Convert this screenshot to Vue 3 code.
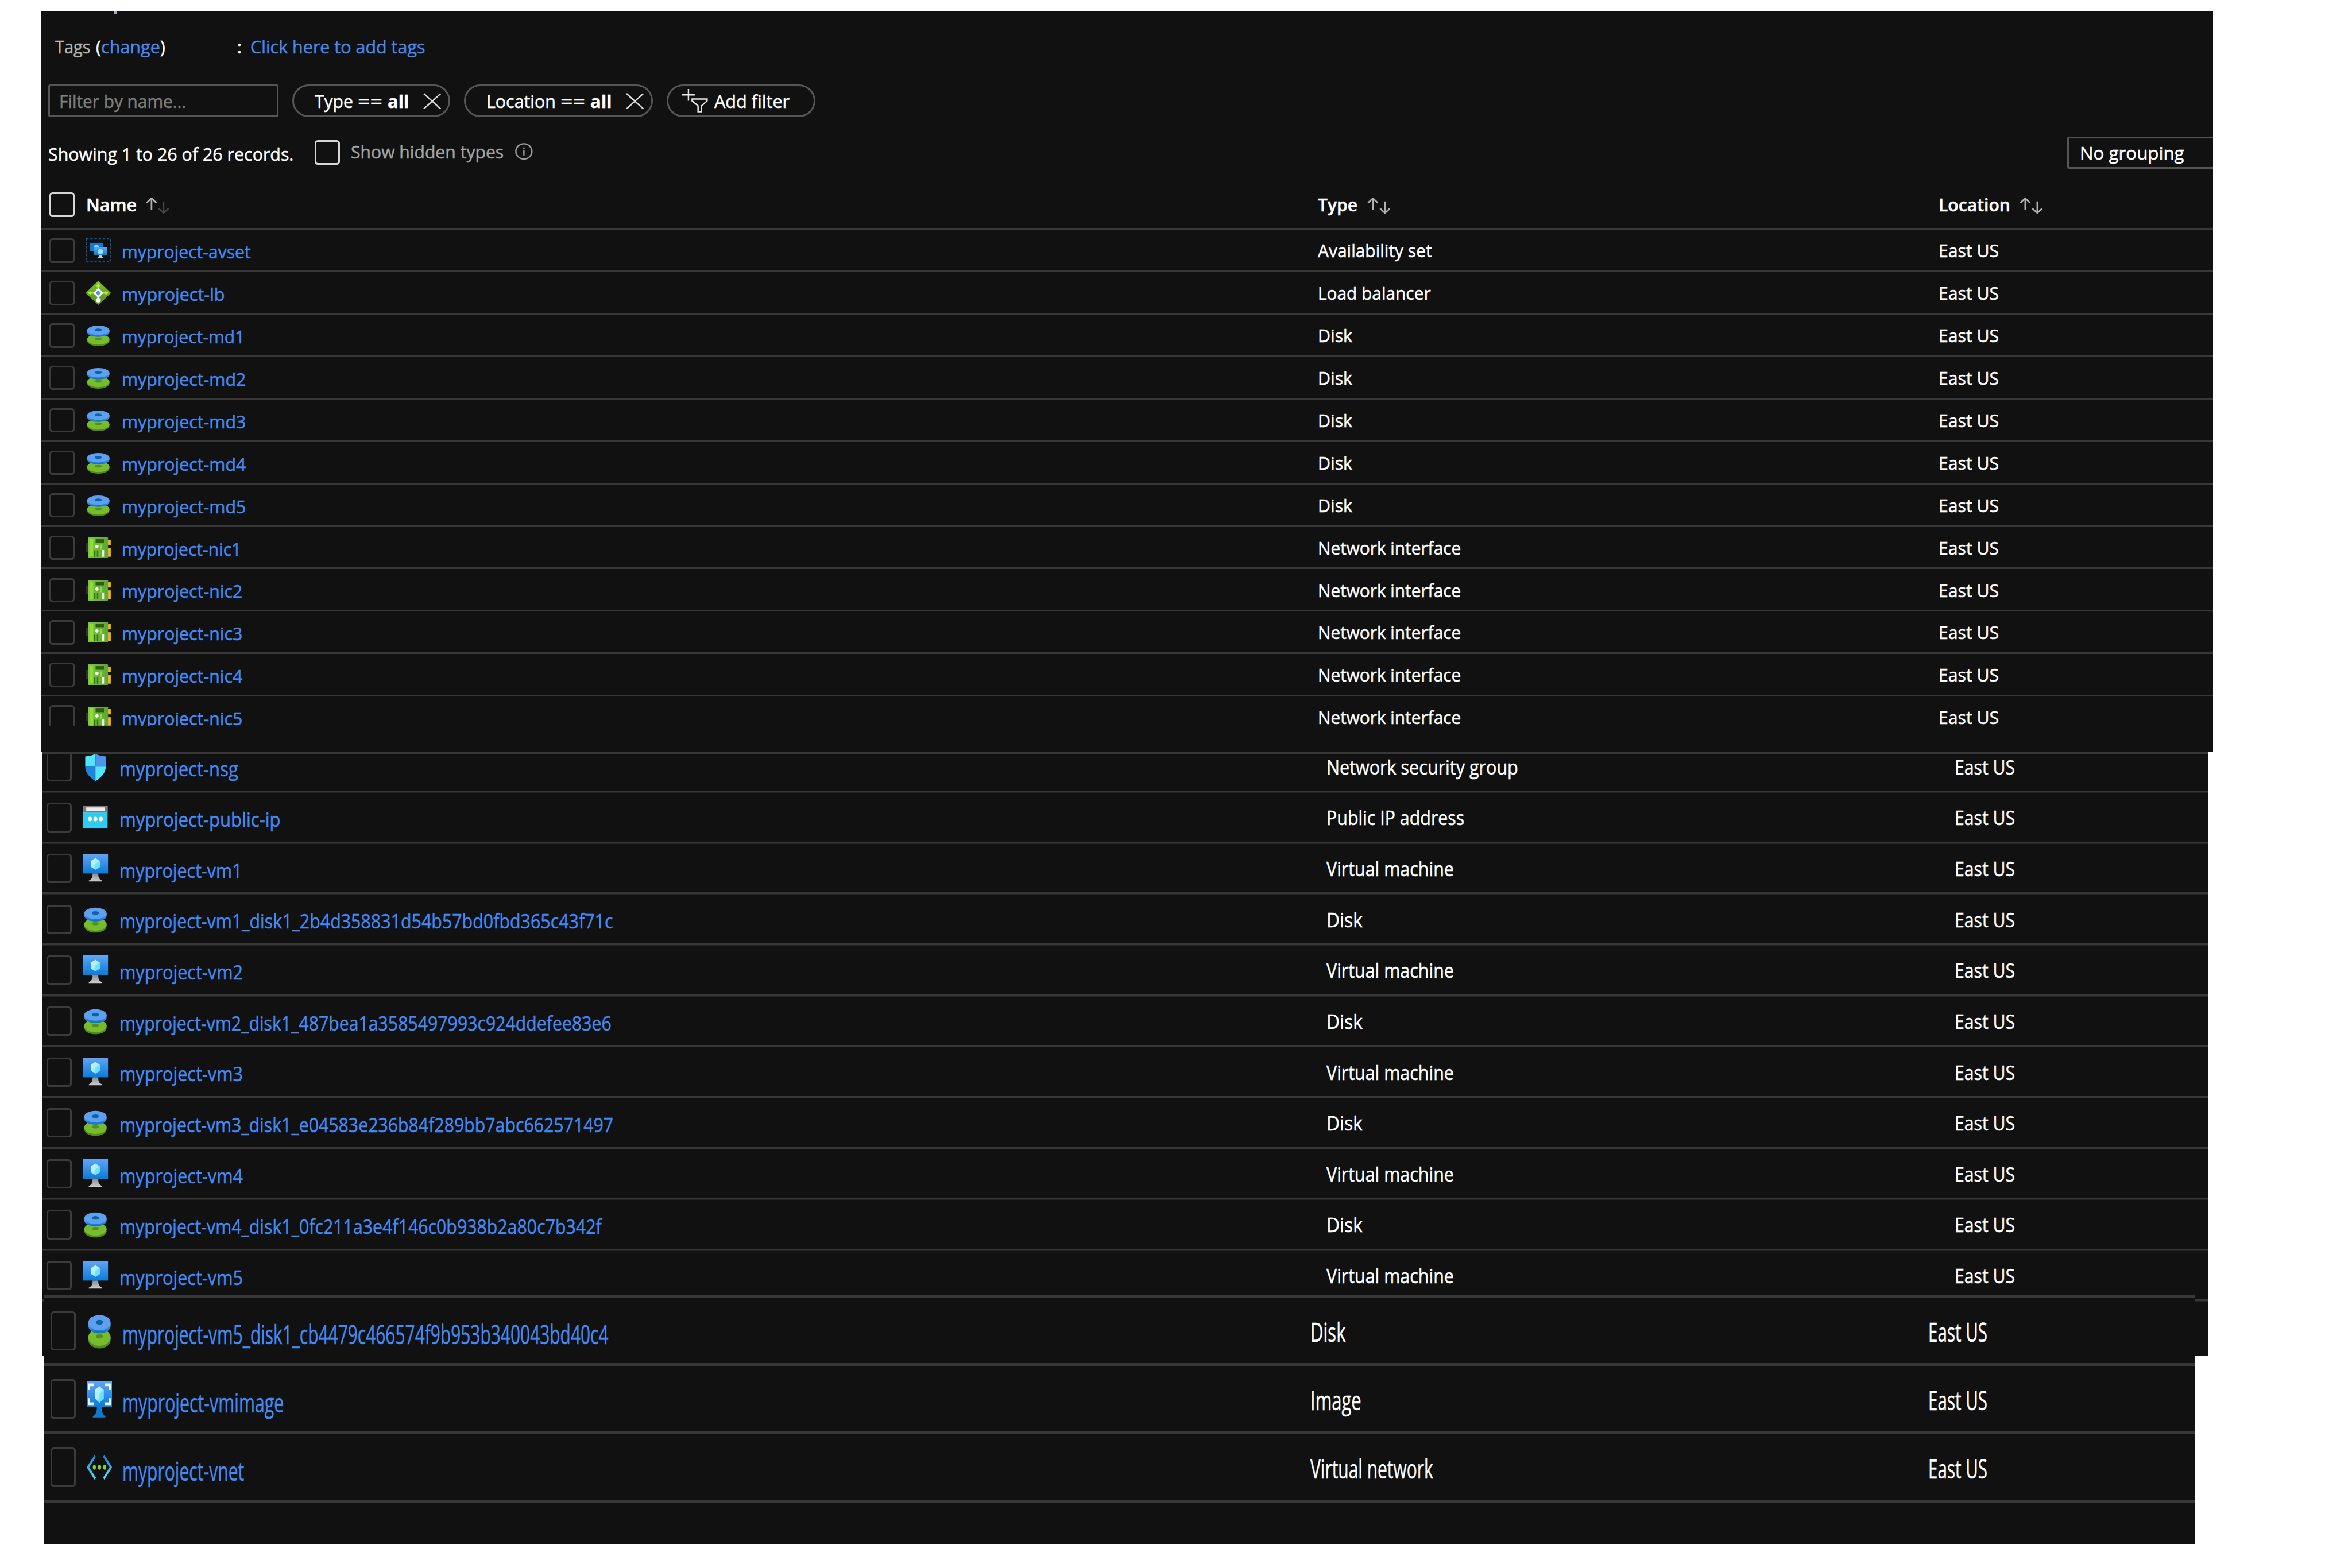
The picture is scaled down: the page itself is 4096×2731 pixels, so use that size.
<script setup>
// 1rem is 1/60 of the window's width; label widths are given in hundredths of it.
const REM = () => parseFloat(getComputedStyle(document.documentElement).fontSize)

// Condenses or widens a label so that it takes exactly the given number of grid units.
function fit(el, { value }) {
  el.style.transform = 'none'
  el.style.marginRight = '0'
  const natural = el.getBoundingClientRect().width
  const target = (value * REM()) / 100
  el.style.transform = `scaleX(${target / natural})`
  el.style.marginRight = `${target - natural}px`
}
const vFit = { mounted: fit }

const vmDisk = (n, hash) => `myproject-vm${n}_disk1_${hash}`

const listA = [
  ['avset', 'myproject-avset', 329, 'Availability set', 291],
  ['lb', 'myproject-lb', 263, 'Load balancer', 288],
  ['disk', 'myproject-md1', 314, 'Disk', 88],
  ['disk', 'myproject-md2', 317, 'Disk', 88],
  ['disk', 'myproject-md3', 317, 'Disk', 88],
  ['disk', 'myproject-md4', 317, 'Disk', 88],
  ['disk', 'myproject-md5', 317, 'Disk', 88],
  ['nic', 'myproject-nic1', 305, 'Network interface', 365],
  ['nic', 'myproject-nic2', 308, 'Network interface', 365],
  ['nic', 'myproject-nic3', 308, 'Network interface', 365],
  ['nic', 'myproject-nic4', 308, 'Network interface', 365],
  ['nic', 'myproject-nic5', 308, 'Network interface', 365],
]
const listB = [
  ['nsg', 'myproject-nsg', 303, 'Network security group', 489],
  ['ip', 'myproject-public-ip', 411, 'Public IP address', 352],
  ['vm', 'myproject-vm1', 313, 'Virtual machine', 325],
  ['disk', vmDisk(1, '2b4d358831d54b57bd0fbd365c43f71c'), 1259, 'Disk', 92],
  ['vm', 'myproject-vm2', 315, 'Virtual machine', 325],
  ['disk', vmDisk(2, '487bea1a3585497993c924ddefee83e6'), 1255, 'Disk', 92],
  ['vm', 'myproject-vm3', 315, 'Virtual machine', 325],
  ['disk', vmDisk(3, 'e04583e236b84f289bb7abc662571497'), 1260, 'Disk', 92],
  ['vm', 'myproject-vm4', 315, 'Virtual machine', 325],
  ['disk', vmDisk(4, '0fc211a3e4f146c0b938b2a80c7b342f'), 1230, 'Disk', 92],
  ['vm', 'myproject-vm5', 315, 'Virtual machine', 325],
]
const listC = [
  ['disk', vmDisk(5, 'cb4479c466574f9b953b340043bd40c4'), 1240, 'Disk', 90],
  ['image', 'myproject-vmimage', 412, 'Image', 130],
  ['vnet', 'myproject-vnet', 311, 'Virtual network', 313],
]
const sections = [
  { cls: 'a', rows: listA, loc: 154 },
  { cls: 'b', rows: listB, loc: 154 },
  { cls: 'c', rows: listC, loc: 151 },
]
</script>

<template>
  <svg class="defs" width="0" height="0" aria-hidden="true">
    <defs>
      <linearGradient id="g-blue" x1="0" y1="0" x2="0" y2="1"><stop offset="0" stop-color="#62a4f3" /><stop offset="1" stop-color="#0a7bda" /></linearGradient>
      <linearGradient id="g-side" x1="0" y1="0" x2="0" y2="1"><stop offset="0" stop-color="#5ea0ef" /><stop offset="1" stop-color="#0072cf" /></linearGradient>
      <linearGradient id="g-green" x1="0" y1="0" x2="0" y2="1"><stop offset="0" stop-color="#7cc62c" /><stop offset="1" stop-color="#568a1c" /></linearGradient>
      <linearGradient id="g-board" x1="0" y1="0" x2="1" y2="0"><stop offset="0" stop-color="#7ccb34" /><stop offset="1" stop-color="#5fa33c" /></linearGradient>
      <linearGradient id="g-cube" x1="0" y1="0" x2="1" y2="1"><stop offset="0" stop-color="#d8f7ff" /><stop offset=".5" stop-color="#a5eeff" /><stop offset="1" stop-color="#3fd0f6" /></linearGradient>
      <linearGradient id="g-stand" x1="0" y1="0" x2="0" y2="1"><stop offset="0" stop-color="#8a8a8a" /><stop offset="1" stop-color="#cfcfcf" /></linearGradient>
      <linearGradient id="g-chev" x1="0" y1="0" x2="0" y2="1"><stop offset="0" stop-color="#1384dc" /><stop offset="1" stop-color="#4fe3fb" /></linearGradient>
    </defs>
    <symbol id="i-avset" viewBox="0 0 18 18" preserveAspectRatio="none">
      <rect x=".5" y=".5" width="17" height="17" fill="none" stroke="#0b5793" stroke-width=".9" stroke-dasharray="1.7 1.2" />
      <rect x="3.1" y="3.4" width="9.2" height="6.3" fill="#0d7bd9" />
      <path d="M7.7 4.6l1.7 1v2.1l-1.7 1-1.7-1V5.600z" fill="#7fd9ff" />
      <rect x="5.800" y="6.700" width="9.300" height="6.100" fill="url(#g-blue)" />
      <path d="M10.500 7.900l1.800 1v2.200l-1.800 1-1.800-1V8.900z" fill="#8be6ff" />
      <path d="M9.700 12.800h1.600l1.200 2.100H8.500z" fill="#c9c9c9" />
    </symbol>
    <symbol id="i-lb" viewBox="0 0 18 18" preserveAspectRatio="none">
      <path d="M9 0l9 9-9 9-9-9z" fill="url(#g-green)" />
      <path d="M9 2v5M2 9h5M16 9h-5" stroke="#b4ec36" stroke-width="1.200" />
      <path d="M9 2.200l1.700 2H7.300zM2 9l2-1.600v3.200zM16 9l-2-1.600v3.200z" fill="#b4ec36" />
      <path d="M9 11v3.500" stroke="#fff" stroke-width="1.400" />
      <ellipse cx="9" cy="14.400" rx="1.800" ry="1.700" fill="#fff" />
      <path d="M9 6l3 3-3 3-3-3z" fill="#fff" stroke="#fff" />
      <path d="M9 7l2 2-2 2-2-2z" fill="#4c96f2" />
    </symbol>
    <symbol id="i-disk" viewBox="0 0 18 18" preserveAspectRatio="none">
      <path d="M1.100 11.600v1.400c0 2.300 3.500 4 7.900 4s7.900-1.700 7.900-4v-1.400z" fill="#55891f" />
      <ellipse cx="9" cy="11.900" rx="7.900" ry="3.900" fill="#76bc2d" />
      <ellipse cx="9" cy="11.500" rx="2.500" ry="1" fill="#568e22" />
      <path d="M1.100 5.300v1.200c0 2.200 3.500 3.600 7.900 3.600s7.900-1.400 7.900-3.600V5.300z" fill="url(#g-side)" />
      <ellipse cx="9" cy="5.200" rx="7.900" ry="3.500" fill="#5ea0ef" />
      <ellipse cx="9" cy="5" rx="2.600" ry="1.100" fill="#0d63a8" />
    </symbol>
    <symbol id="i-nic" viewBox="0 0 18 18" preserveAspectRatio="none">
      <rect x=".3" y="5.500" width="1.700" height="6.500" fill="#303030" />
      <rect x="15.500" y="3" width="2.300" height="3.900" fill="#fbb900" />
      <rect x="15.500" y="9" width="2.300" height="6.600" fill="#fbb900" />
      <rect x="1.900" y="1.300" width="14" height="15.300" rx=".5" fill="url(#g-board)" />
      <rect x="2.800" y="2.500" width="2.600" height="12.800" fill="#8edb3a" />
      <rect x="10.300" y="6.500" width="1.500" height="4" fill="#8edb3a" />
      <rect x="7.100" y="2.600" width="5.900" height="2.700" fill="#2f5e12" />
      <circle cx="8" cy="8" r="1.200" fill="#fff" />
      <path d="M6.500 10.800v4.800M8.500 10.800v4.800" stroke="#39701a" stroke-width="1" />
      <rect x="11.700" y="10.600" width="1.400" height="5" fill="#f0f7ea" />
    </symbol>
    <symbol id="i-nsg" viewBox="0 0 18 18" preserveAspectRatio="none">
      <path d="M9 .9C7 2 4.500 2.500 1.800 2.600V9H9z" fill="#50e6ff" />
      <path d="M9 .9c2 1.100 4.500 1.600 7.300 1.700V9H9z" fill="#4c95ea" />
      <path d="M1.800 8.900c0 4.500 4.200 7 7.200 8.900V8.900z" fill="#1f84de" />
      <path d="M16.300 8.900c0 4.500-4.200 7-7.300 8.900V8.900z" fill="#50e6ff" />
    </symbol>
    <symbol id="i-ip" viewBox="0 0 18 18" preserveAspectRatio="none">
      <rect x=".4" y="2" width="17.200" height="13.800" rx=".3" fill="#30cbee" />
      <rect x=".4" y="2" width="17.200" height="3.800" fill="#7a7a7a" />
      <rect x="2.500" y="2.900" width="13.100" height="2.100" fill="#ececec" />
      <g fill="#fff"><circle cx="5.200" cy="10" r="1.400" /><circle cx="9" cy="10" r="1.400" /><circle cx="12.900" cy="10" r="1.400" /></g>
    </symbol>
    <symbol id="i-vm" viewBox="0 0 18 18" preserveAspectRatio="none">
      <path d="M7 12h4c0 2.500.6 3.600 2.700 4.400V17H4.300v-.6C6.400 15.600 7 14.500 7 12z" fill="url(#g-stand)" />
      <rect width="18" height="12.100" fill="url(#g-blue)" />
      <path d="M9 2.600l3.100 1.700v3.800L9 9.800 5.900 8.100V4.300z" fill="url(#g-cube)" />
      <path d="M9 6.200l3.100-1.800v3.700L9 9.800z" fill="#6fe2fb" />
    </symbol>
    <symbol id="i-image" viewBox="0 0 18 18" preserveAspectRatio="none">
      <path d="M7.200 12.500h3.500c0 2.700.5 3.700 2.500 4.600v.5H4.300v-.5c2.200-.9 2.900-1.900 2.900-4.600z" fill="#1079cc" />
      <rect y=".9" width="18" height="12" fill="url(#g-blue)" />
      <path d="M1.600 5V2.600H5M13 2.600h3.400V5M1.600 8.800v2.500H5M13 11.300h3.400V8.800" fill="none" stroke="#eef6ff" stroke-width="1.300" />
      <path d="M9 3.200l3 1.700v4.100L9 10.900 6 9V4.900z" fill="url(#g-cube)" />
      <path d="M9 7l3-2v4l-3 1.900z" fill="#6fe2fb" />
    </symbol>
    <symbol id="i-vnet" viewBox="0 0 18 18" preserveAspectRatio="none">
      <path d="M6 3.900L.9 9.100 6 14.300M12 3.900l5.100 5.200-5.100 5.200" fill="none" stroke="url(#g-chev)" stroke-width="1.300" />
      <g fill="#86d02c"><circle cx="5.400" cy="9.100" r="1.100" /><circle cx="9.100" cy="9.100" r="1.100" /><circle cx="12.700" cy="9.100" r="1.100" /></g>
    </symbol>
    <symbol id="i-up" viewBox="0 0 29 42"><path d="M14.500 2v29M2 13.500L14.500 2 27 13.500" fill="none" stroke="currentColor" stroke-width="4" /></symbol>
    <symbol id="i-down" viewBox="0 0 29 42"><path d="M14.500 10v29M2 28l12.500 11.500L27 28" fill="none" stroke="currentColor" stroke-width="4" /></symbol>
    <symbol id="i-x" viewBox="0 0 46 42" preserveAspectRatio="none"><path d="M1.500 1.500l43 39M44.500 1.500l-43 39" fill="none" stroke="#dcdcdc" stroke-width="3.600" /></symbol>
  </svg>

  <main class="page">
    <section v-for="s in sections" :key="s.cls" class="panel" :class="s.cls">
      <template v-if="s.cls === 'a'">
        <div class="tags">
          <i class="stub"></i>
          <span v-fit="90" class="t soft label">Tags</span>
          <span v-fit="177" class="t tagval">(<a>change</a>)</span>
          <span v-fit="14" class="t colon">:</span>
          <span v-fit="446" class="t add"><a>Click here to add tags</a></span>
        </div>
        <div class="filters">
          <div class="input"><span v-fit="324" class="t">Filter by name...</span></div>
          <div class="pill p1">
            <span v-fit="98" class="t">Type</span>
            <span v-fit="63" class="t eq">==</span>
            <b v-fit="55" class="t all">all</b>
            <svg class="x"><use href="#i-x" /></svg>
          </div>
          <div class="pill p2">
            <span v-fit="177" class="t">Location</span>
            <span v-fit="63" class="t eq">==</span>
            <b v-fit="55" class="t all">all</b>
            <svg class="x"><use href="#i-x" /></svg>
          </div>
          <div class="pill p3">
            <svg class="funnel" viewBox="0 0 66 60">
              <path d="M16 0v30M0 15h32" stroke="#e6e6e6" stroke-width="3.600" />
              <path d="M25.500 25.500h38v5L49.500 43v15h-9V43l-15-12.500z" fill="none" stroke="#e6e6e6" stroke-width="3.600" />
            </svg>
            <span v-fit="192" class="t">Add filter</span>
          </div>
        </div>
        <div class="records">
          <span v-fit="626" class="t showing">Showing 1 to 26 of 26 records.</span>
          <i class="box lit"></i>
          <span v-fit="390" class="t soft hidden">Show hidden types</span>
          <svg class="info" viewBox="0 0 45 43">
            <ellipse cx="22.500" cy="21.500" rx="20.500" ry="19.500" fill="none" stroke="#9a9a9a" stroke-width="3.600" />
            <path d="M22.500 18v14M22.500 11.500v4" stroke="#9a9a9a" stroke-width="3.600" />
          </svg>
          <div class="select"><span v-fit="266" class="t">No grouping</span></div>
        </div>
        <div class="cols head">
          <i class="box lit"></i>
          <div class="th hname"><b v-fit="129" class="t">Name</b><svg class="up"><use href="#i-up" /></svg><svg class="down dim"><use href="#i-down" /></svg></div>
          <div class="th"><b v-fit="101" class="t">Type</b><svg class="up"><use href="#i-up" /></svg><svg class="down"><use href="#i-down" /></svg></div>
          <div class="th"><b v-fit="183" class="t">Location</b><svg class="up"><use href="#i-up" /></svg><svg class="down"><use href="#i-down" /></svg></div>
        </div>
      </template>

      <div v-for="r in s.rows" :key="r[1]" class="cols row">
        <i class="box"></i>
        <svg class="icon"><use :href="'#i-' + r[0]" /></svg>
        <div class="name"><a v-fit="r[2]" class="t">{{ r[1] }}</a></div>
        <div class="cell"><span v-fit="r[4]" class="t">{{ r[3] }}</span></div>
        <div class="cell"><span v-fit="s.loc" class="t">East US</span></div>
      </div>
      <div class="tail"></div>
    </section>
  </main>
</template>

<style>
html { font-size: calc(100vw / 60); background: #fff; }
body { margin: 0; overflow: hidden; }
</style>

<style scoped>
.defs { position: absolute; }
.page {
  box-sizing: border-box;
  height: 100vh;
  padding-top: .29rem;
  overflow: hidden;
  font-family: "Open Sans", "Noto Sans", sans-serif;
  color: #fff;
  background: #fff;
}
.panel {
  --fs: .445rem;
  --line: 3px;
  position: relative;
  box-sizing: border-box;
  overflow: hidden;
  background: #111;
  font-size: var(--fs);
}
.t {
  display: inline-block;
  flex: none;
  line-height: 1;
  white-space: nowrap;
  transform-origin: 0 50%;
  -webkit-text-stroke: .5px currentColor;
}
a { color: #428af6; }
.soft { color: #b4b4b4; }
svg { display: block; flex: none; }

/* shared table geometry */
.cols {
  display: grid;
  grid-template-columns: var(--c1) var(--c2) var(--c3) var(--c4) 1fr;
  align-items: start;
  padding-left: var(--pad);
}
.row, .tail { box-sizing: border-box; box-shadow: inset 0 var(--line) 0 #373737; }
.row { height: var(--h); overflow: hidden; }
.box {
  display: block;
  box-sizing: border-box;
  flex: none;
  width: .65rem;
  height: var(--boxh);
  border: 3px solid #3b3b3b;
  border-radius: .08rem;
}
.row .box, .icon { margin-top: var(--boxy); }
.icon { width: .65rem; height: var(--boxh); }
.name { padding-top: var(--namey); line-height: 0; }
.cell { padding-top: var(--celly); line-height: 0; }

.a {
  --pad: .2rem; --c1: .926rem; --c2: .924rem; --c3: 30.515rem; --c4: 15.83rem;
  --h: 1.0825rem; --boxy: .265rem; --boxh: .62rem; --namey: .395rem; --celly: .367rem;
  width: 55.39rem; height: 18.89rem; margin-left: 1.06rem;
}
.b {
  --fs: .51rem; --line: 3.5px;
  --pad: .097rem; --c1: .927rem; --c2: .936rem; --c3: 30.79rem; --c4: 16.03rem;
  --h: 1.2984rem; --boxy: .31rem; --boxh: .75rem; --namey: .483rem; --celly: .443rem;
  width: 55.25rem; height: 15.41rem; margin-left: 1.09rem;
  border-top: 5px solid #373737;
}
.b .row:first-child { margin-top: calc(-.304rem - 5px); }
.c {
  --fs: .68rem; --line: 5px;
  --pad: .157rem; --c1: .923rem; --c2: .91rem; --c3: 30.31rem; --c4: 15.76rem;
  --h: 1.743rem; --boxy: .42rem; --boxh: 1rem; --namey: .656rem; --celly: .601rem;
  width: 54.86rem; height: 6.49rem; margin: -1.69rem 0 0 1.13rem; padding-top: .13rem;
}

/* the last row of the first list is cut below its link's baseline */
.a .row:nth-last-child(2) { height: .785rem; overflow: visible; }
.a .row:nth-last-child(2) .box { height: .52rem; border-bottom: 0; border-radius: .08rem .08rem 0 0; }
.a .row:nth-last-child(2) .icon { clip-path: inset(0 0 .1rem 0); }
.a .row:nth-last-child(2) .name { box-sizing: border-box; height: .785rem; overflow: hidden; }
.a .tail { box-shadow: none; }
.tail { height: 1.5rem; }

/* toolbar area */
.tags, .filters, .records { display: flex; align-items: flex-start; }
.tags { height: 1.87rem; }
.tags .t { margin-top: .697rem; }
.stub { width: .07rem; height: .055rem; margin-left: 1.84rem; background: #9fb0c0; }
.label { margin-left: -1.57rem; }
.tagval { margin-left: .15rem; }
.colon { margin-left: 1.82rem; }
.add { margin-left: .21rem; }

.filters { height: 1.32rem; }
.filters .t { margin-top: .163rem; }
.input, .pill { display: flex; align-items: flex-start; box-sizing: border-box; height: .83rem; border: 3px solid #565656; }
.input { width: 5.88rem; margin-left: .17rem; padding-left: .24rem; border-radius: .05rem; color: #7d7d7d; }
.pill { border-radius: .42rem; }
.p1 { width: 4.03rem; margin-left: .35rem; padding-left: .525rem; }
.p2 { width: 4.82rem; margin-left: .35rem; padding-left: .52rem; }
.p3 { width: 3.79rem; margin-left: .35rem; padding-left: .35rem; }
.eq { margin-left: .12rem; }
.all { margin-left: .13rem; font-weight: 700; }
.x { width: .46rem; height: .42rem; margin: .165rem 0 0 .365rem; }
.funnel { width: .66rem; height: .6rem; margin: .065rem .16rem 0 0; }

.records { height: 1.42rem; }
.showing { margin: .245rem 0 0 .17rem; }
.lit { border-color: #d6d6d6; height: .63rem; }
.records .box { margin: .1rem 0 0 .535rem; }
.hidden { margin: .175rem 0 0 .28rem; color: #a3a3a3; }
.info { width: .45rem; height: .43rem; margin: .166rem 0 0 .29rem; }
.select { box-sizing: border-box; flex: none; width: 4rem; height: .83rem; margin-left: auto; margin-right: -.29rem; padding: .165rem 0 0 .275rem; border: 3px solid #565656; border-radius: .05rem; line-height: 0; }

.head { height: .921rem; }
.hname { grid-column: 2 / 4; padding-left: .01rem; }
.th { display: flex; align-items: flex-start; color: #b0b0b0; }
.th .t { margin-top: .105rem; color: #fff; font-weight: 600; }
.up, .down { width: .29rem; height: .42rem; margin-top: .145rem; }
.up { margin-left: .24rem; }
.down { margin-left: .015rem; }
.dim { color: #454545; }
</style>
